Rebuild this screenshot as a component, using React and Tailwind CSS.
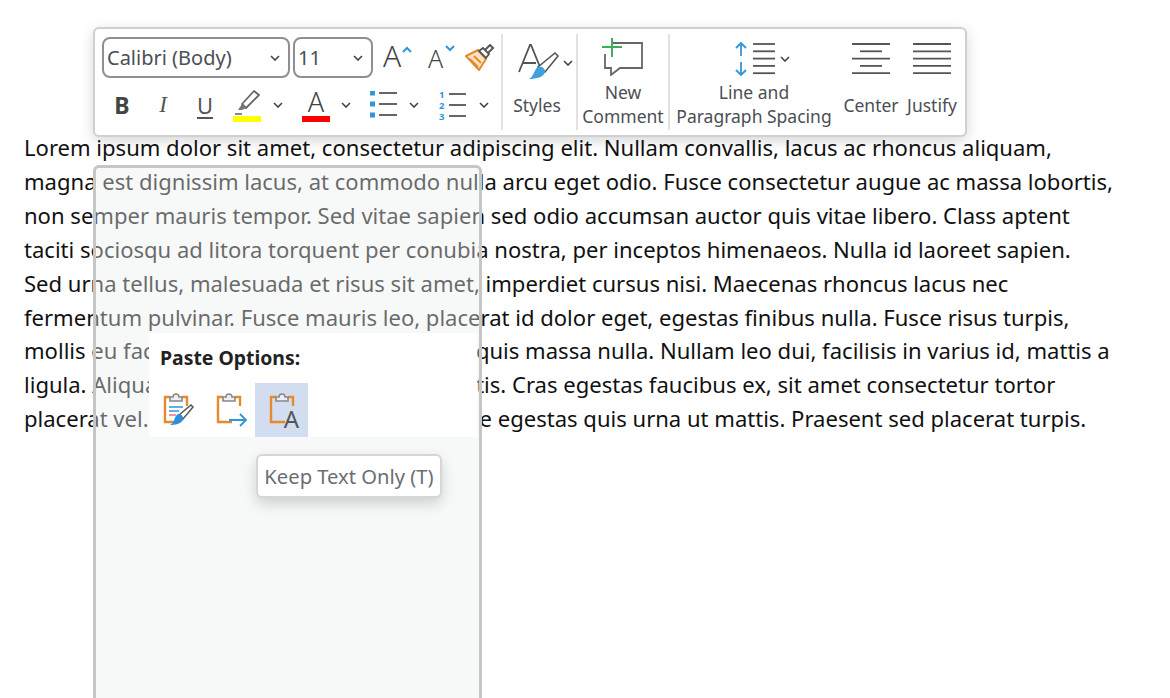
import React from "react";

const LINES = [
  "Lorem ipsum dolor sit amet, consectetur adipiscing elit. Nullam convallis, lacus ac rhoncus aliquam,",
  "magna est dignissim lacus, at commodo nulla arcu eget odio. Fusce consectetur augue ac massa lobortis,",
  "non semper mauris tempor. Sed vitae sapien sed odio accumsan auctor quis vitae libero. Class aptent",
  "taciti sociosqu ad litora torquent per conubia nostra, per inceptos himenaeos. Nulla id laoreet sapien.",
  "Sed urna tellus, malesuada et risus sit amet, imperdiet cursus nisi. Maecenas rhoncus lacus nec",
  "fermentum pulvinar. Fusce mauris leo, placerat id dolor eget, egestas finibus nulla. Fusce risus turpis,",
  "mollis eu facilisis vitae, pulvinar at elit sit ut quis massa nulla. Nullam leo dui, facilisis in varius id, mattis a",
  "ligula. Aliquam erat volutpat. Duis vitae mattis. Cras egestas faucibus ex, sit amet consectetur tortor",
  "placerat vel. Sed at ipsum vitae, tortor, vitae e egestas quis urna ut mattis. Praesent sed placerat turpis.",
];

function Chev({ className = "" }) {
  return (
    <svg width="10" height="6" viewBox="0 0 10 6" className={className}>
      <path d="M1 1l4 4 4-4" fill="none" stroke="#444" strokeWidth="1.6" />
    </svg>
  );
}

function Lines({ rows, w = 38 }) {
  return (
    <svg width={w} height="32" viewBox={`0 0 ${w} 32`}>
      {rows.map(([a, b], i) => (
        <path key={i} d={`M${a} ${1 + i * 7.3}H${b}`} stroke="#555" strokeWidth="1.8" />
      ))}
    </svg>
  );
}

function Select({ w, label }) {
  return (
    <div className={`${w} h-[41px] border-2 border-[#8f8f8f] rounded-lg flex items-center justify-between pl-[3px] pr-[8px] text-[20px] text-[#4a4f55]`}>
      <span>{label}</span>
      <Chev />
    </div>
  );
}

function GrowA({ size, caret, y }) {
  return (
    <svg width="30" height="30" viewBox="0 0 30 30">
      <text x="0" y={y} fontSize={size} fontFamily="'Noto Sans', sans-serif" fontWeight="300" fill="#444">A</text>
      <path d={caret} fill="none" stroke="#2f96d8" strokeWidth="2" />
    </svg>
  );
}

function Brush() {
  return (
    <svg width="30" height="28" viewBox="0 0 30 28">
      <path d="M1 12l12-6 8 9-7 11z" fill="#fbe3c4" stroke="#e8892b" strokeWidth="2" strokeLinejoin="round" />
      <path d="M5 15l8 8M9 12l7 7" stroke="#e8892b" strokeWidth="1.8" />
      <path d="M14 7l4-3 6 6-3 4z" fill="#fff" stroke="#555" strokeWidth="1.8" />
      <path d="M20 6l5-5 3 3-5 5" fill="none" stroke="#555" strokeWidth="2" />
    </svg>
  );
}

function Highlighter() {
  return (
    <svg width="28" height="28" viewBox="0 0 28 28">
      <path d="M9 16L21 3l5 4-13 13z" fill="#fff" stroke="#666" strokeWidth="1.8" strokeLinejoin="round" />
      <path d="M9 16l4 4-4 2-4 0z" fill="#777" />
      <path d="M2 26h7" stroke="#888" strokeWidth="2" />
    </svg>
  );
}

function BulletList() {
  return (
    <svg width="28" height="28" viewBox="0 0 28 28">
      {[2, 13, 24].map((y) => (
        <g key={y}>
          <rect x="0" y={y - 2.5} width="5" height="5" fill="#2f96d8" />
          <path d={`M9 ${y}H27`} stroke="#555" strokeWidth="1.8" />
        </g>
      ))}
    </svg>
  );
}

function NumberList() {
  return (
    <svg width="28" height="30" viewBox="0 0 28 30">
      {[1, 2, 3].map((n, i) => (
        <g key={n}>
          <text x="0" y={8 + i * 11} fontSize="9.5" fontWeight="700" fontFamily="'Noto Sans', sans-serif" fill="#2f96d8">{n}</text>
          <path d={`M10 ${4 + i * 11}H27`} stroke="#555" strokeWidth="1.8" />
        </g>
      ))}
    </svg>
  );
}

function StylesIcon() {
  return (
    <svg width="44" height="42" viewBox="0 0 44 42">
      <path d="M1 30L12 3h1l9 22M5 21h13" fill="none" stroke="#555" strokeWidth="1.8" />
      <path d="M20 25L37 11l3 3-13 16z" fill="#fff" stroke="#555" strokeWidth="1.6" />
      <path d="M20 25c4-1 7 1 7 5-1 5-9 7-16 7 5-2 5-10 9-12z" fill="#3f9fdf" />
    </svg>
  );
}

function CommentIcon() {
  return (
    <svg width="42" height="38" viewBox="0 0 42 38">
      <path d="M11 5h29v25H18l-9 7v-7H3V16" fill="none" stroke="#666" strokeWidth="1.8" />
      <path d="M10 0v19M0 9h20" stroke="#3fae5a" strokeWidth="2" />
    </svg>
  );
}

function SpacingIcon() {
  return (
    <svg width="14" height="34" viewBox="0 0 14 34">
      <path d="M7 1v13M2 6l5-5 5 5M7 20v13M2 28l5 5 5-5" fill="none" stroke="#2f96d8" strokeWidth="1.8" />
    </svg>
  );
}

function ClipBoard() {
  return (
    <>
      <path d="M7 4H2v25h14" fill="none" stroke="#e8892b" strokeWidth="2.4" />
      <path d="M19 4h5v9" fill="none" stroke="#e8892b" strokeWidth="2.4" />
      <path d="M7 8V4h3a3 3 0 016 0h3v4z" fill="#eee" stroke="#888" strokeWidth="1.6" />
    </>
  );
}

function PasteKeep() {
  return (
    <svg width="32" height="34" viewBox="0 0 32 34">
      <ClipBoard />
    </svg>
  );
}

function PasteFormat() {
  return (
    <svg width="32" height="34" viewBox="0 0 32 34">
      <ClipBoard />
      <path d="M6 14h14M6 18h10" stroke="#2f96d8" strokeWidth="1.5" />
      <path d="M6 22h7" stroke="#ef6f7a" strokeWidth="1.5" />
      <path d="M16 22l12-10 2 2-10 12z" fill="#fff" stroke="#555" strokeWidth="1.5" />
      <path d="M15 21c4 0 6 3 5 6-2 4-8 5-13 5 5-2 4-9 8-11z" fill="#2f8fd8" />
    </svg>
  );
}

function PasteMerge() {
  return (
    <svg width="32" height="34" viewBox="0 0 32 34">
      <ClipBoard />
      <path d="M13 27h17M24 21l6 6-6 6" fill="none" stroke="#2f96d8" strokeWidth="1.8" />
    </svg>
  );
}

function Toolbar() {
  return (
    <div className="absolute left-[93px] top-[27px] w-[874px] h-[110px] bg-white border-2 border-[#d0d0d0] rounded-md shadow-[0_4px_14px_rgba(0,0,0,0.16)] flex pl-[7px] text-[#4a4f55] text-[17.5px] leading-[24px]">
      <div className="w-[399px] pt-[8px] flex flex-col gap-[7px] shrink-0">
        <div className="flex items-center">
          <Select w="w-[188px]" label="Calibri (Body)" />
          <div className="ml-[3px]">
            <Select w="w-[80px]" label="11" />
          </div>
          <div className="ml-[10px]">
            <GrowA size="30" y="24" caret="M20 9l4-4 4 4" />
          </div>
          <div className="ml-[15px]">
            <GrowA size="25" y="25" caret="M18 3l4 4 4-4" />
          </div>
          <div className="ml-[7px]">
            <Brush />
          </div>
        </div>
        <div className="flex items-center h-[40px]">
          <span className="w-[40px] text-center text-[23px] font-bold text-[#444]">B</span>
          <span className="w-[42px] text-center text-[23px] italic font-['Liberation_Serif',serif] text-[#555]">I</span>
          <span className="w-[42px] text-center text-[22px] underline underline-offset-3 text-[#555]">U</span>
          <div className="w-[42px] flex flex-col items-center">
            <Highlighter />
            <div className="w-[28px] h-[6px] bg-[#ffff00]" />
          </div>
          <Chev className="ml-[5px]" />
          <div className="w-[28px] ml-[19px] flex flex-col items-center">
            <span className="text-[27px] leading-[28px] font-light text-[#444]">A</span>
            <div className="w-[28px] h-[6px] bg-[#ff0000]" />
          </div>
          <Chev className="ml-[11px]" />
          <div className="ml-[19px]">
            <BulletList />
          </div>
          <Chev className="ml-[11px]" />
          <div className="ml-[20px]">
            <NumberList />
          </div>
          <Chev className="ml-[12px]" />
        </div>
      </div>

      <div className="w-[2px] h-[96px] mt-[5px] bg-[#e2e2e2] shrink-0" />

      <div className="w-[73px] shrink-0 flex flex-col items-center pt-[13px]">
        <div className="flex items-center h-[42px] pl-[12px]">
          <StylesIcon />
          <Chev className="ml-[1px]" />
        </div>
        <span className="mt-[9px] pr-[5px]">Styles</span>
      </div>

      <div className="w-[2px] h-[96px] mt-[5px] bg-[#e2e2e2] shrink-0" />

      <div className="w-[90px] shrink-0 flex flex-col items-center pt-[9px] text-center">
        <CommentIcon />
        <span className="mt-[4px]">New<br />Comment</span>
      </div>

      <div className="w-[2px] h-[96px] mt-[5px] bg-[#e2e2e2] shrink-0" />

      <div className="w-[168px] shrink-0 flex flex-col items-center pt-[13px] text-center">
        <div className="flex items-center gap-[5px] h-[34px] pl-[16px]">
          <SpacingIcon />
          <Lines w={22} rows={[[0, 22], [0, 22], [0, 22], [0, 22], [0, 22]]} />
          <Chev />
        </div>
        <span className="mt-[4px]">Line and<br />Paragraph Spacing</span>
      </div>

      <div className="w-[62px] ml-[2px] shrink-0 flex flex-col items-center pt-[14px]">
        <Lines rows={[[0, 38], [8, 30], [0, 38], [8, 30], [0, 38]]} />
        <span className="mt-[18px]">Center</span>
      </div>

      <div className="w-[60px] shrink-0 flex flex-col items-center pt-[14px]">
        <Lines rows={[[0, 38], [0, 38], [0, 38], [0, 38], [0, 38]]} />
        <span className="mt-[18px]">Justify</span>
      </div>
    </div>
  );
}

function PasteMenu() {
  return (
    <div className="absolute left-[93px] top-[165px] w-[389px] h-[560px] bg-[#eaeeee]/40 border-[3px] border-[#c6c6c6] rounded-t-md pt-[165px] pl-[53px]">
      <div className="w-[328px] h-[104px] bg-white flex flex-col">
        <div className="pl-[11px] pt-[12px] text-[19.4px] leading-[26px] font-bold text-[#222]">Paste Options:</div>
        <div className="flex mt-[12px] h-[54px]">
          <div className="w-[53px] pl-[6px] flex items-center justify-center">
            <PasteFormat />
          </div>
          <div className="w-[53px] pl-[6px] flex items-center justify-center">
            <PasteMerge />
          </div>
          <div className="w-[53px] pl-[6px] bg-[#d2ddf0] relative flex items-center justify-center">
            <PasteKeep />
            <span className="absolute right-[9px] bottom-[6px] text-[24px] leading-[24px] text-[#555]">A</span>
          </div>
        </div>
      </div>
      <div className="ml-[107px] mt-[17px] w-[186px] h-[44px] bg-white border-2 border-[#d6d6d6] rounded-md shadow-[0_6px_14px_rgba(0,0,0,0.16)] flex items-center justify-center text-[20.2px] text-[#6a6e73]">
        Keep Text Only (T)
      </div>
    </div>
  );
}

export default function App() {
  return (
    <div className="relative w-[1170px] h-[698px] overflow-hidden bg-white font-['Noto_Sans',sans-serif]">
      <div className="pl-[24px] pt-[131px] text-[22.05px] leading-[33.9px] text-[#111] whitespace-nowrap">
        {LINES.map((line) => (
          <div key={line}>{line}</div>
        ))}
      </div>
      <PasteMenu />
      <Toolbar />
    </div>
  );
}
